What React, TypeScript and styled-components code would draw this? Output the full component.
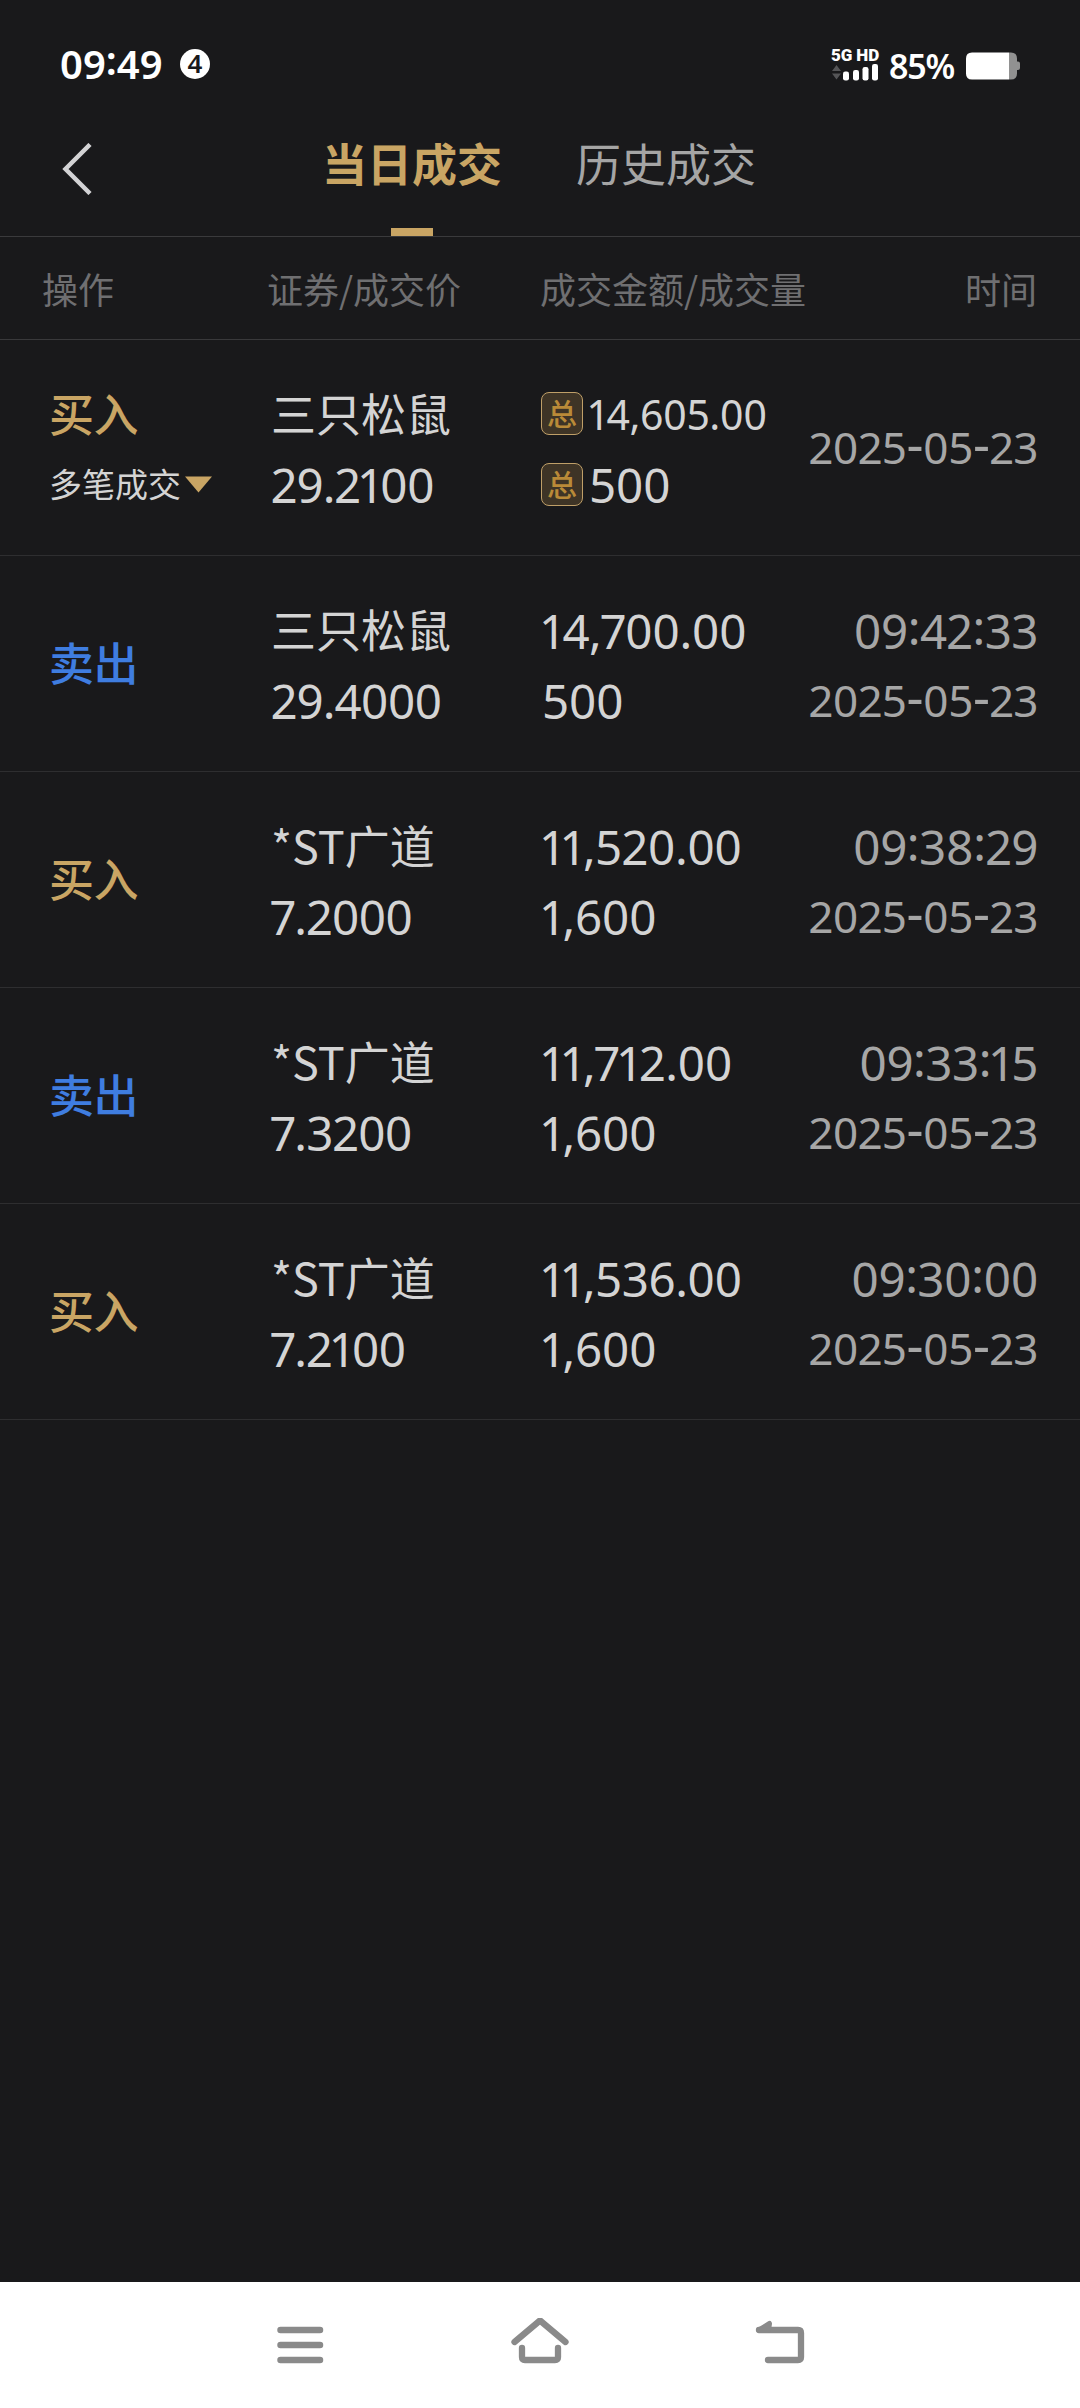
import React from 'react';
import styled, { createGlobalStyle } from 'styled-components';

const GOLD = '#c9a564';
const BLUE = '#3f7de0';
const LIGHT = '#d4d4d4';
const CJK = '"Noto Sans CJK SC", sans-serif';
const LATIN = '"Noto Sans", "Noto Sans CJK SC", sans-serif';

const GlobalStyle = createGlobalStyle`
  * { box-sizing: border-box; }
  body { margin: 0; background: #19191b; }
`;

const Screen = styled.div`
  width: 1080px;
  height: 2408px;
  display: flex;
  flex-direction: column;
  background: #19191b;
  color: ${LIGHT};
  font-family: ${CJK};
  overflow: hidden;
`;

const StatusBar = styled.header`
  height: 100px;
  flex: none;
  display: flex;
  justify-content: space-between;
  align-items: flex-start;
  padding: 44px 60px 0 60px;
  color: #fff;
  font-family: ${LATIN};
`;

const StatusGroup = styled.div`
  display: flex;
  align-items: center;
  height: 40px;
`;

const Clock = styled.span`
  width: 104px;
  margin-top: -5px;
  font-size: 40px;
  font-weight: 600;
  line-height: 38px;
  white-space: nowrap;
`;

const CountDot = styled.span`
  width: 30px;
  height: 30px;
  margin-left: 16px;
  border-radius: 50%;
  background: #fff;
  color: #19191b;
  font-size: 26px;
  font-weight: 600;
  line-height: 29px;
  text-align: center;
`;

const Network = styled.div`
  display: flex;
  flex-direction: column;
  width: 48px;
  margin-right: 10px;
`;

const NetworkLabel = styled.span`
  font-family: Roboto, sans-serif;
  font-size: 17px;
  font-weight: 900;
  line-height: 16px;
  letter-spacing: -0.1px;
  white-space: nowrap;
`;

const Percent = styled.span`
  width: 67px;
  font-size: 34px;
  font-weight: 600;
  letter-spacing: -1.2px;
  line-height: 40px;
  margin: 4px 10px 0 0;
`;

const BatteryIcon = styled.svg`
  margin-top: 3px;
`;

const TabBar = styled.nav`
  height: 137px;
  flex: none;
  display: flex;
  border-bottom: 1px solid #3a3a3c;
`;

const BackButton = styled.button`
  display: flex;
  align-items: flex-start;
  width: 322px;
  padding: 43px 0 0 62px;
  border: 0;
  background: none;
`;

const Tab = styled.div<{ $active?: boolean }>`
  display: flex;
  flex-direction: column;
  align-items: center;
  justify-content: space-between;
  width: 180px;
  margin-right: 74px;
  padding-top: 30px;
  font-size: 45px;
  line-height: 66px;
  font-weight: ${p => (p.$active ? 700 : 400)};
  color: ${p => (p.$active ? GOLD : '#a5a5a5')};
`;

const TabMark = styled.i`
  width: 42px;
  height: 8px;
  background: ${GOLD};
`;

const HeadRow = styled.div`
  height: 103px;
  flex: none;
  display: grid;
  grid-template-columns: 225px 273px 1fr auto;
  align-items: center;
  padding: 0 43px 0 42px;
  border-bottom: 1px solid #39393b;
  font-size: 36px;
  line-height: 54px;
  color: #6f6f71;
`;

const Row = styled.div`
  height: 216px;
  flex: none;
  display: grid;
  grid-template-columns: 222px 271px 1fr auto;
  padding: 40px 42px 0 49px;
  border-bottom: 1px solid #2e2e30;
`;

const Cell = styled.div<{ $right?: boolean; $single?: boolean }>`
  display: flex;
  flex-direction: column;
  height: ${p => (p.$single ? 135 : 140)}px;
  justify-content: ${p => (p.$single ? 'center' : 'flex-start')};
  align-items: ${p => (p.$right ? 'flex-end' : 'flex-start')};
`;

const Line = styled.div`
  height: 70px;
  display: flex;
  align-items: flex-start;
  line-height: 66px;
  white-space: nowrap;
`;

const Side = styled(Line)<{ $sell?: boolean }>`
  font-size: 45px;
  font-weight: 500;
  letter-spacing: -0.5px;
  color: ${p => (p.$sell ? BLUE : GOLD)};
`;

const Multi = styled(Line)`
  font-size: 33px;
`;

const Caret = styled.svg`
  margin: 26px 0 0 4px;
`;

const Name = styled(Line)`
  font-size: 45px;
`;

const Num = styled(Line)<{ $size?: number; $dim?: boolean; $track?: number }>`
  font-family: ${LATIN};
  font-feature-settings: "pnum";
  font-size: ${p => p.$size || 47.5}px;
  letter-spacing: ${p => p.$track || 0}px;
  line-height: 69px;
  color: ${p => (p.$dim ? '#a6a6a6' : LIGHT)};
`;

const Colon = styled.span`
  display: inline-block;
  line-height: 1;
  vertical-align: 4px;
`;

const Dash = styled.span`
  display: inline-block;
  font-size: 1.2em;
  line-height: 1;
  vertical-align: 1px;
`;

const TotalBadge = styled.span<{ $top?: boolean }>`
  width: 42px;
  height: 43px;
  margin: ${p => (p.$top ? 12 : 13)}px 6px 0 -1px;
  border: 1.5px solid #bf9f68;
  border-radius: 8px;
  background: #3e3426;
  color: #b98a38;
  font-family: ${CJK};
  font-size: 30px;
  font-weight: 500;
  line-height: 38px;
  letter-spacing: 0;
  text-align: center;
`;

const NavBar = styled.footer`
  height: 126px;
  flex: none;
  margin-top: auto;
  display: grid;
  grid-template-columns: 60px 60px 60px;
  justify-content: center;
  column-gap: 180px;
  padding-top: 36px;
  background: #fff;
`;

type Trade = {
  side: 'buy' | 'sell';
  name: string;
  price: string;
  amount: string;
  volume: string;
  time?: string;
  date: string;
  total?: boolean;
};

const trades: Trade[] = [
  { side: 'buy', name: '三只松鼠', price: '29.2100', amount: '14,605.00', volume: '500', date: '2025-05-23', total: true },
  { side: 'sell', name: '三只松鼠', price: '29.4000', amount: '14,700.00', volume: '500', time: '09:42:33', date: '2025-05-23' },
  { side: 'buy', name: '*ST广道', price: '7.2000', amount: '11,520.00', volume: '1,600', time: '09:38:29', date: '2025-05-23' },
  { side: 'sell', name: '*ST广道', price: '7.3200', amount: '11,712.00', volume: '1,600', time: '09:33:15', date: '2025-05-23' },
  { side: 'buy', name: '*ST广道', price: '7.2100', amount: '11,536.00', volume: '1,600', time: '09:30:00', date: '2025-05-23' },
];

/* Lifts colons and hyphens to the middle of the digits. */
const Stamp = ({ text }: { text: string }) => (
  <span>
    {text.split(/([:-])/).map((part, i) =>
      part === ':' ? <Colon key={i}>:</Colon> : part === '-' ? <Dash key={i}>-</Dash> : part,
    )}
  </span>
);

const TradeRow = ({ t }: { t: Trade }) => (
  <Row>
    <Cell $single={!t.total}>
      <Side $sell={t.side === 'sell'}>{t.side === 'buy' ? '买入' : '卖出'}</Side>
      {t.total && (
        <Multi>
          多笔成交
          <Caret width="27" height="17" viewBox="0 0 27 17"><path d="M0 0.5H27L13.5 16.5Z" fill={GOLD} /></Caret>
        </Multi>
      )}
    </Cell>
    <Cell>
      <Name>{t.name}</Name>
      <Num $track={-0.9}>{t.price}</Num>
    </Cell>
    <Cell>
      <Num $size={t.total ? 41 : undefined} $track={-0.5}>{t.total && <TotalBadge $top>总</TotalBadge>}{t.amount}</Num>
      <Num $track={-0.4}>{t.total && <TotalBadge>总</TotalBadge>}{t.volume}</Num>
    </Cell>
    <Cell $right $single={!t.time}>
      {t.time && <Num $dim $track={-0.5}><Stamp text={t.time} /></Num>}
      <Num $dim $size={44} $track={-0.5}><Stamp text={t.date} /></Num>
    </Cell>
  </Row>
);

export default function App() {
  return (
    <Screen>
      <GlobalStyle />
      <StatusBar>
        <StatusGroup>
          <Clock>09<Colon>:</Colon>49</Clock>
          <CountDot>4</CountDot>
        </StatusGroup>
        <StatusGroup>
          <Network>
            <NetworkLabel>5G HD</NetworkLabel>
            <svg width="48" height="18" viewBox="0 0 48 18">
              <path d="M1 8L5.500 2L10 8ZM1 10.500H10L5.500 16.500Z" fill="#555557" />
              <g fill="#fff">
                <rect x="12" y="8.500" width="6" height="9" rx="2.200" />
                <rect x="22" y="7" width="6" height="10.500" rx="2.200" />
                <rect x="31.500" y="4" width="6" height="13.500" rx="2.200" />
                <rect x="41" y="1" width="6" height="16.500" rx="2.200" />
              </g>
            </svg>
          </Network>
          <Percent>85%</Percent>
          <BatteryIcon width="54" height="28" viewBox="0 0 54 28">
            <path d="M43 0.500H45Q51 0.500 51 6.500V9.500H52Q54 9.500 54 11.500V16Q54 18 52 18H51V21.500Q51 27.500 45 27.500H43Z" fill="#919191" />
            <path d="M6 0.500H43V27.500H6Q0 27.500 0 21.500V6.500Q0 0.500 6 0.500Z" fill="#fff" />
          </BatteryIcon>
        </StatusGroup>
      </StatusBar>

      <TabBar>
        <BackButton aria-label="返回">
          <svg width="32" height="52" viewBox="0 0 32 52">
            <path d="M28 1.500L3.500 26L28 50.500" fill="none" stroke="#d3d3d5" strokeWidth="4.500" />
          </svg>
        </BackButton>
        <Tab $active>当日成交<TabMark /></Tab>
        <Tab>历史成交</Tab>
      </TabBar>

      <HeadRow>
        <span>操作</span>
        <span>证券/成交价</span>
        <span>成交金额/成交量</span>
        <span>时间</span>
      </HeadRow>

      {trades.map((t, i) => <TradeRow key={i} t={t} />)}

      <NavBar>
        <svg width="60" height="50" viewBox="0 0 60 50">
          <path d="M10.500 12H50M10.500 27H50M10.500 42H50" fill="none" stroke="#8a8a8a" strokeWidth="6.500" strokeLinecap="round" />
        </svg>
        <svg width="60" height="50" viewBox="0 0 60 50">
          <path d="M4.500 24L30 2.500L55.500 24M12 30V39Q12 42 15 42H45Q48 42 48 39V30" fill="none" stroke="#8a8a8a" strokeWidth="6.300" strokeLinecap="round" strokeLinejoin="round" />
        </svg>
        <svg width="60" height="50" viewBox="0 0 60 50">
          <path d="M9 12H48Q51 12 51 15V39Q51 42 48 42H18" fill="none" stroke="#8a8a8a" strokeWidth="6.300" strokeLinecap="round" />
          <path d="M9 12L19.500 5.500L18.500 12Z" fill="#8a8a8a" stroke="#8a8a8a" strokeWidth="5" strokeLinejoin="round" />
        </svg>
      </NavBar>
    </Screen>
  );
}
